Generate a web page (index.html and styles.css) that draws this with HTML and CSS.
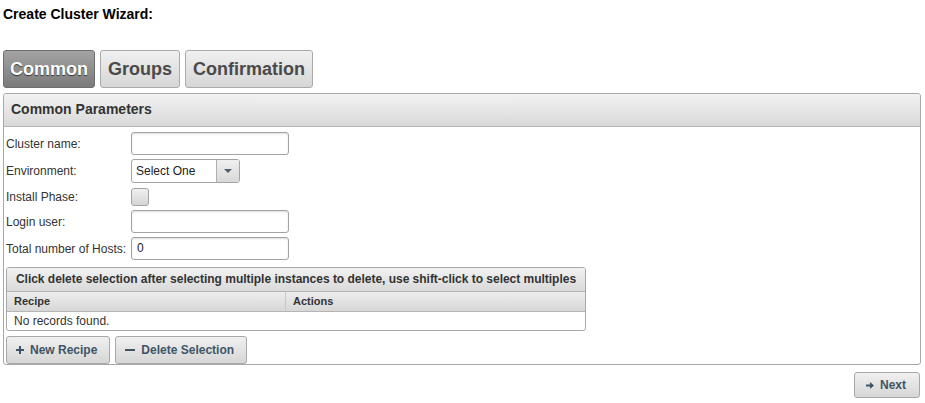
FILE: index.html
```html
<!DOCTYPE html>
<html>
<head>
<meta charset="utf-8">
<link rel="stylesheet" href="styles.css">
</head>
<body>
<div class="page">
  <h1 class="title">Create Cluster Wizard:</h1>
  <div class="tabs">
    <div class="tab tab-active">Common</div>
    <div class="tab">Groups</div>
    <div class="tab">Confirmation</div>
  </div>
  <div class="panel">
    <div class="panel-header">Common Parameters</div>
    <div class="panel-body">
      <div class="form">
        <label class="lbl">Cluster name:</label>
        <div class="field"><span class="input"></span></div>
        <label class="lbl">Environment:</label>
        <div class="field">
          <span class="select"><span class="select-text">Select One</span><span class="select-btn"><span class="caret"></span></span></span>
        </div>
        <label class="lbl">Install Phase:</label>
        <div class="field field-check"><span class="checkbox"></span></div>
        <label class="lbl">Login user:</label>
        <div class="field"><span class="input"></span></div>
        <label class="lbl">Total number of Hosts:</label>
        <div class="field"><span class="input">0</span></div>
      </div>
      <div class="dt">
        <div class="dt-caption">Click delete selection after selecting multiple instances to delete, use shift-click to select multiples</div>
        <div class="dt-head">
          <div class="dt-col dt-col1">Recipe</div>
          <div class="dt-col">Actions</div>
        </div>
        <div class="dt-row">No records found.</div>
      </div>
      <div class="btns">
        <span class="btn"><span class="ico ico-plus"></span>New Recipe</span>
        <span class="btn"><span class="ico ico-minus"></span>Delete Selection</span>
      </div>
    </div>
  </div>
  <div class="nav">
    <span class="btn btn-next"><svg class="ico-arrow" width="8" height="7" viewBox="0 0 8 7"><rect x="0" y="2.5" width="5" height="2" fill="#3f5566"/><polygon points="4,0 8,3.5 4,7" fill="#3f5566"/></svg>Next</span>
  </div>
</div>
</body>
</html>
```
FILE: styles.css
```css
html, body {
  margin: 0;
  padding: 0;
  background: #fff;
}
body {
  font-family: "Liberation Sans", Arial, sans-serif;
  color: #333;
}
.page {
  padding: 0 4px 0 3px;
}
.title {
  margin: 0;
  padding-top: 6px;
  font-size: 14px;
  line-height: 16px;
  font-weight: bold;
  color: #000;
}
.tabs {
  display: flex;
  gap: 5px;
  margin-top: 28px;
}
.tab {
  height: 36px;
  line-height: 36px;
  padding: 0 7px;
  border: 1px solid #aaa;
  border-radius: 3px;
  font-size: 18px;
  font-weight: bold;
  color: #4a4a4a;
  background: linear-gradient(#f0f0f0, #d6d6d6);
}
.tab-active {
  padding: 0 6px;
  color: #fff;
  background: linear-gradient(#a3a3a3, #7a7a7a);
  border-color: #6e6e6e;
  text-shadow: 0 1px 1px #333;
}
.panel {
  margin-top: 5px;
  border: 1px solid #a8a8a8;
  border-radius: 3px;
}
.panel-header {
  height: 32px;
  line-height: 31px;
  padding-left: 7px;
  font-size: 14px;
  font-weight: bold;
  color: #333;
  background: linear-gradient(#f2f2f2, #d9d9d9);
  border-bottom: 1px solid #b5b5b5;
  border-radius: 3px 3px 0 0;
}
.panel-body {
  padding: 5px 2px 0 2px;
}
.form {
  display: grid;
  grid-template-columns: 125px auto;
  row-gap: 4px;
  align-items: center;
}
.lbl {
  font-size: 12px;
  color: #333;
}
.field {
  display: flex;
  align-items: center;
}
.field-check {
  height: 19px;
}
.input {
  box-sizing: border-box;
  width: 158px;
  height: 23px;
  border: 1px solid #a3a3a3;
  border-radius: 3px;
  box-shadow: inset 0 1px 2px #ddd;
  font-size: 12px;
  line-height: 21px;
  padding-left: 5px;
  color: #222;
  background: #fff;
}
.select {
  box-sizing: border-box;
  display: flex;
  width: 109px;
  height: 24px;
  border: 1px solid #a3a3a3;
  border-radius: 3px;
  overflow: hidden;
}
.select-text {
  flex: 1;
  font-size: 12px;
  line-height: 22px;
  padding-left: 4px;
  color: #222;
}
.select-btn {
  width: 22px;
  border-left: 1px solid #b0b0b0;
  background: linear-gradient(#f0f0f0, #d8d8d8);
  display: flex;
  align-items: center;
  justify-content: center;
}
.caret {
  width: 0;
  height: 0;
  border-left: 4px solid transparent;
  border-right: 4px solid transparent;
  border-top: 4px solid #4a6070;
}
.checkbox {
  box-sizing: border-box;
  width: 18px;
  height: 18px;
  border: 1px solid #a3a3a3;
  border-radius: 3px;
  background: linear-gradient(#f0f0f0, #d4d4d4);
}
.dt {
  margin-top: 7px;
  width: 580px;
  box-sizing: border-box;
  border: 1px solid #a8a8a8;
  border-radius: 3px;
  overflow: hidden;
}
.dt-caption {
  height: 23px;
  line-height: 23px;
  text-align: center;
  font-size: 12px;
  font-weight: bold;
  letter-spacing: -0.02px;
  color: #333;
  background: linear-gradient(#f2f2f2, #d9d9d9);
  border-bottom: 1px solid #b5b5b5;
}
.dt-head {
  display: flex;
  height: 19px;
  background: linear-gradient(#ededed, #d7d7d7);
  border-bottom: 1px solid #b5b5b5;
}
.dt-col {
  flex: 1;
  font-size: 11px;
  font-weight: bold;
  line-height: 19px;
  padding-left: 7px;
  color: #333;
}
.dt-col1 {
  flex: 0 0 271px;
  border-right: 1px solid #c8c8c8;
}
.dt-row {
  height: 18px;
  line-height: 18px;
  padding-left: 7px;
  font-size: 12px;
  color: #333;
}
.btns {
  display: flex;
  gap: 5px;
  margin-top: 5px;
}
.btn {
  box-sizing: border-box;
  display: inline-flex;
  align-items: center;
  height: 28px;
  padding: 0 12px 0 9px;
  border: 1px solid #a8a8a8;
  border-radius: 3px;
  background: linear-gradient(#f0f0f0, #d6d6d6);
  font-size: 12px;
  font-weight: bold;
  color: #3f5566;
}
.ico {
  display: inline-block;
  margin-right: 6px;
}
.ico-plus {
  width: 8px;
  height: 8px;
  background:
    linear-gradient(#3f5566, #3f5566) center / 8px 2px no-repeat,
    linear-gradient(#3f5566, #3f5566) center / 2px 8px no-repeat;
}
.ico-minus {
  width: 10px;
  height: 8px;
  background: linear-gradient(#3f5566, #3f5566) center / 10px 2px no-repeat;
}
.ico-arrow {
  margin-right: 6px;
}
.nav {
  display: flex;
  justify-content: flex-end;
  margin-top: 7px;
}
.btn-next {
  height: 26px;
  margin-right: 1px;
  padding: 0 13px 0 11px;
}
```
